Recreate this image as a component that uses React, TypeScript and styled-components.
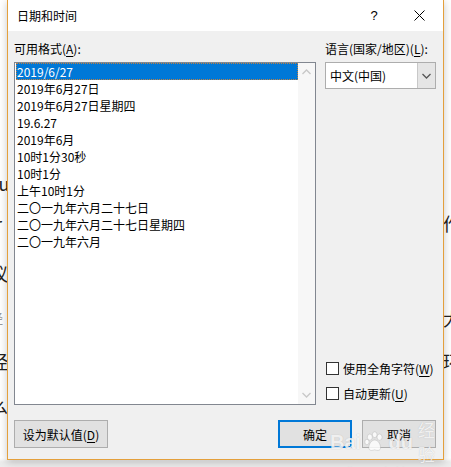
import styled, { createGlobalStyle } from 'styled-components';

const GlobalStyle = createGlobalStyle`
  html, body { margin: 0; padding: 0; }
  body {
    width: 451px;
    height: 467px;
    overflow: hidden;
    background: #fff;
    font-family: "Noto Sans CJK SC", "Noto Sans", sans-serif;
  }
`;

const Screen = styled.div`
  position: relative;
  width: 451px;
  height: 467px;
  overflow: hidden;
  background: #fff;
`;

// the Word document peeking out behind the dialog
const Backdrop = styled.div`
  display: flex;
  flex-direction: column;
  height: 100%;
  background: linear-gradient(#fff 0, #fff 458px, #ececec 462px);
`;

const DocLine = styled.div<{ $top: number }>`
  display: flex;
  justify-content: space-between;
  margin-top: ${p => p.$top}px;
  height: 20px;
  font-size: 18px;
  line-height: 20px;
  color: #222;
`;

const Frag = styled.span<{ $side: 'l' | 'r'; $faint?: boolean }>`
  margin-left: ${p => (p.$side === 'l' ? '-10px' : '0')};
  margin-right: ${p => (p.$side === 'r' ? '-10px' : '0')};
  color: ${p => (p.$faint ? '#999' : '#222')};
  font-size: ${p => (p.$faint ? '13px' : '18px')};
`;

const Dialog = styled.div`
  position: absolute;
  left: 7px;
  top: 0;
  width: 437px;
  height: 460px;
  box-sizing: border-box;
  border: 1px solid #e4a03c;
  border-top: none;
  background: #f0f0f0;
  box-shadow: 0 2px 8px rgba(0, 0, 0, 0.22);
  display: flex;
  flex-direction: column;
  font-size: 12px;
  color: #000;
`;

const TitleBar = styled.div`
  height: 31px;
  background: #fff;
  display: flex;
  align-items: center;
  padding-left: 9px;
`;

const Title = styled.div`
  flex: 1;
  font-size: 12px;
`;

const TitleButton = styled.div<{ $w: number }>`
  width: ${p => p.$w}px;
  height: 31px;
  display: flex;
  align-items: center;
  justify-content: center;
  font-size: 13px;
  font-family: "Liberation Sans", Arial, sans-serif;
`;

const Body = styled.div`
  flex: 1;
  padding: 9px 7px 11px 6px;
  display: flex;
  flex-direction: column;
`;

const Columns = styled.div`
  display: grid;
  grid-template-columns: 302px 111px;
  column-gap: 9px;
`;

const Column = styled.div`
  display: flex;
  flex-direction: column;
`;

const Label = styled.div`
  height: 17px;
  line-height: 17px;
  margin-bottom: 5px;
  white-space: nowrap;
`;

const Key = styled.span`
  text-decoration: underline;
  text-underline-offset: 2px;
`;

const ListBox = styled.div`
  height: 343px;
  box-sizing: border-box;
  border: 1px solid #828790;
  background: #fff;
  display: flex;
`;

const Items = styled.div`
  flex: 1;
  padding: 0 0 0 1px;
`;

const Item = styled.div<{ $selected?: boolean }>`
  height: 17px;
  line-height: 17px;
  padding-left: 1px;
  box-sizing: border-box;
  white-space: nowrap;
  background: ${p => (p.$selected ? '#0078d7' : 'transparent')};
  color: ${p => (p.$selected ? '#fff' : '#000')};
  outline: ${p => (p.$selected ? '1px dotted #c08040' : 'none')};
  outline-offset: -1px;
`;

const ScrollBar = styled.div`
  width: 17px;
  background: #f7f7f7;
  display: flex;
  flex-direction: column;
  justify-content: space-between;
  align-items: center;
  padding: 6px 0;
`;

const Combo = styled.div`
  height: 27px;
  box-sizing: border-box;
  border: 1px solid #adadad;
  background: #fff;
  display: flex;
`;

const ComboText = styled.div`
  flex: 1;
  padding-left: 4px;
  line-height: 25px;
`;

const ComboButton = styled.div`
  width: 17px;
  background: #e5e5e5;
  border-left: 1px solid #c8c8c8;
  display: flex;
  align-items: center;
  justify-content: center;
`;

const Checks = styled.div`
  margin-top: auto;
  margin-bottom: 3px;
  display: flex;
  flex-direction: column;
  gap: 8px;
`;

const CheckRow = styled.div`
  display: flex;
  align-items: center;
  height: 17px;
  gap: 4px;
  padding-left: 1px;
  white-space: nowrap;
`;

const Box = styled.div`
  width: 13px;
  height: 13px;
  box-sizing: border-box;
  border: 1px solid #333;
  background: #fff;
`;

const Buttons = styled.div`
  margin-top: 15px;
  display: flex;
  gap: 10px;
`;

const Button = styled.div<{ $w: number; $primary?: boolean }>`
  width: ${p => p.$w}px;
  height: 28px;
  box-sizing: border-box;
  border: ${p => (p.$primary ? '2px solid #0078d7' : '1px solid #adadad')};
  background: #e1e1e1;
  display: flex;
  align-items: center;
  justify-content: center;
  white-space: nowrap;
`;

const Spacer = styled.div`
  flex: 1;
`;

const Watermark = styled.div`
  position: absolute;
  left: 330px;
  top: 418px;
  display: flex;
  flex-direction: column;
  align-items: center;
  color: rgba(255, 255, 255, 0.8);
  text-shadow: 0 0 1px rgba(130, 130, 130, 0.45);
  pointer-events: none;
`;

const MarkTop = styled.div`
  display: flex;
  align-items: center;
  font-family: "Liberation Sans", Arial, sans-serif;
  font-weight: bold;
  font-size: 20px;
  line-height: 24px;
  gap: 1px;
`;

const MarkCn = styled.span`
  font-family: "Noto Sans CJK SC", sans-serif;
  font-size: 17px;
  font-weight: normal;
  margin-left: 4px;
`;

const MarkUrl = styled.div`
  font-family: "Liberation Sans", Arial, sans-serif;
  font-size: 10px;
  line-height: 11px;
  letter-spacing: 0.3px;
`;

const formats = [
  '2019/6/27',
  '2019年6月27日',
  '2019年6月27日星期四',
  '19.6.27',
  '2019年6月',
  '10时1分30秒',
  '10时1分',
  '上午10时1分',
  '二〇一九年六月二十七日',
  '二〇一九年六月二十七日星期四',
  '二〇一九年六月',
];

const docLines: { top: number; l?: string; r?: string; faint?: boolean }[] = [
  { top: 173, l: 'su' },
  { top: 20, l: 'ir', r: '作' },
  { top: 30, l: '议' },
  { top: 25, l: '经', r: '大', faint: true },
  { top: 23, l: '经', r: '环' },
  { top: 24, l: '么' },
];

const Chevron = ({ up, color }: { up?: boolean; color: string }) => (
  <svg width="9" height="6" viewBox="0 0 9 6">
    <polyline
      points={up ? '0.5,5 4.5,1 8.5,5' : '0.5,1 4.5,5 8.5,1'}
      fill="none"
      stroke={color}
      strokeWidth="1.3"
    />
  </svg>
);

const CloseIcon = () => (
  <svg width="11" height="11" viewBox="0 0 11 11">
    <path d="M0.5 0.5 L10.5 10.5 M10.5 0.5 L0.5 10.5" stroke="#000" strokeWidth="1" />
  </svg>
);

const PawIcon = () => (
  <svg width="22" height="22" viewBox="0 0 22 22" style={{ margin: '0 2px' }}>
    <g fill="rgba(255,255,255,0.8)" stroke="rgba(140,140,140,0.45)" strokeWidth="0.6">
      <ellipse cx="6" cy="6" rx="2.6" ry="3.2" />
      <ellipse cx="11" cy="3.5" rx="2.4" ry="3" />
      <ellipse cx="16" cy="6" rx="2.6" ry="3.2" />
      <ellipse cx="3" cy="11" rx="2.2" ry="2.8" />
      <path d="M11 9 C7 9 5 14 5 17 C5 20 8 20 11 19 C14 20 17 20 17 17 C17 14 15 9 11 9 Z" />
    </g>
  </svg>
);

const App = () => (
  <>
    <GlobalStyle />
    <Screen>
      <Backdrop>
        {docLines.map((d, i) => (
          <DocLine key={i} $top={d.top}>
            <Frag $side="l" $faint={d.faint}>{d.l ?? ''}</Frag>
            <Frag $side="r">{d.r ?? ''}</Frag>
          </DocLine>
        ))}
      </Backdrop>

      <Dialog>
        <TitleBar>
          <Title>日期和时间</Title>
          <TitleButton $w={46}>?</TitleButton>
          <TitleButton $w={44}><CloseIcon /></TitleButton>
          <Spacer style={{ flex: '0 0 2px' }} />
        </TitleBar>

        <Body>
          <Columns>
            <Column>
              <Label>可用格式(<Key>A</Key>):</Label>
              <ListBox>
                <Items>
                  {formats.map((f, i) => (
                    <Item key={f} $selected={i === 0}>{f}</Item>
                  ))}
                </Items>
                <ScrollBar>
                  <Chevron up color="#c8c8c8" />
                  <Chevron color="#c8c8c8" />
                </ScrollBar>
              </ListBox>
            </Column>

            <Column>
              <Label>语言(国家/地区)(<Key>L</Key>):</Label>
              <Combo>
                <ComboText>中文(中国)</ComboText>
                <ComboButton><Chevron color="#555" /></ComboButton>
              </Combo>
              <Checks>
                <CheckRow><Box /><span>使用全角字符(<Key>W</Key>)</span></CheckRow>
                <CheckRow><Box /><span>自动更新(<Key>U</Key>)</span></CheckRow>
              </Checks>
            </Column>
          </Columns>

          <Buttons>
            <Button $w={94}><span>设为默认值(<Key>D</Key>)</span></Button>
            <Spacer />
            <Button $w={74} $primary>确定</Button>
            <Button $w={74}>取消</Button>
          </Buttons>
        </Body>
      </Dialog>

      <Watermark>
        <MarkTop>
          Bai<PawIcon />du<MarkCn>经验</MarkCn>
        </MarkTop>
        <MarkUrl>jingyan.baidu.com</MarkUrl>
      </Watermark>
    </Screen>
  </>
);

export default App;
